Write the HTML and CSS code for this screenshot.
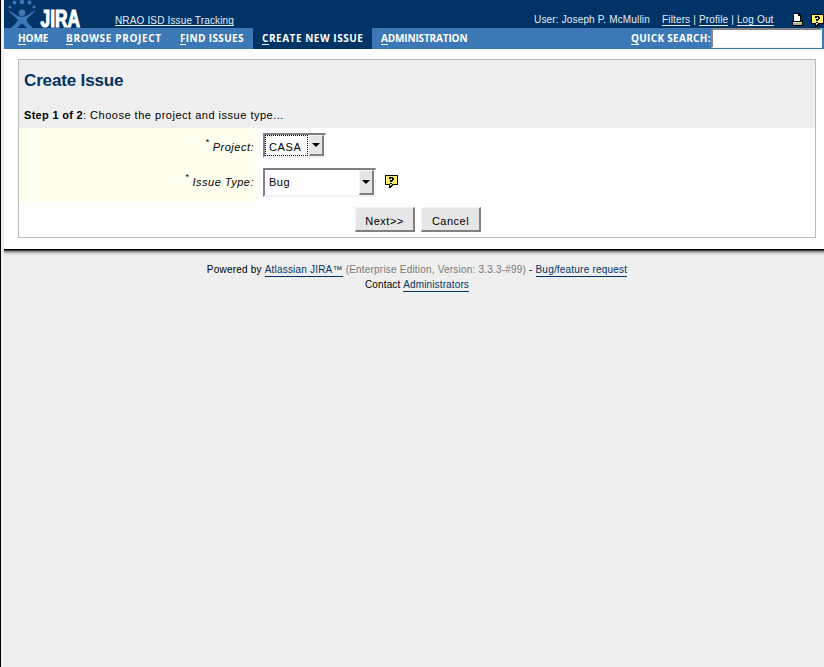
FILE: index.html
```
<!DOCTYPE html>
<html lang="en">
<head>
<meta charset="utf-8">
<title>Create Issue - NRAO ISD Issue Tracking</title>
<link rel="stylesheet" href="styles.css">
</head>
<body>
<div class="page">
  <header class="top">
    <svg class="logo" width="80" height="28" viewBox="0 0 80 28" aria-label="JIRA">
      <g fill="#3c78b5">
        <circle cx="6" cy="7" r="1.6"/><circle cx="10.500" cy="2.500" r="2"/><circle cx="18" cy="2" r="2.300"/><circle cx="25.500" cy="2.500" r="2"/><circle cx="30" cy="7" r="1.600"/>
        <circle cx="18" cy="13" r="3.400"/>
        <path d="M4 10C9 12 13 17 18 17S27 12 32 10C28 15 23 18 22.500 20C23 23 27 26 29 28H23C21 27 20 24 18 24S15 27 13 28H7C9 26 13 23 13.500 20C13 18 8 15 4 10Z"/>
      </g>
      <text class="logo-word" x="36.500" y="27" textLength="39.500" lengthAdjust="spacingAndGlyphs">JIRA</text>
    </svg>
    <a class="site">NRAO ISD Issue Tracking</a>
    <div class="user">
      <span class="who">User: Joseph P. McMullin</span>
      <span class="links"><a>Filters</a> | <a>Profile</a> | <a>Log Out</a></span>
    </div>
    <svg class="printer" width="13" height="13" viewBox="0 0 13 13" shape-rendering="crispEdges">
      <path d="M3 0H8L10 2V7H12V12L11 13H1V8L2 7Z" fill="#000"/>
      <path d="M3 1H7V3H9V8H3Z" fill="#fff"/><path d="M2 9H11V10H2Z" fill="#ddd"/><path d="M2 10H11V12H2Z" fill="#aaa"/><path d="M7 10H10V11H7Z" fill="#9c3"/>
    </svg>
    <svg class="help" width="13" height="13" viewBox="0 0 13 13" shape-rendering="crispEdges">
      <path d="M0 0H13V10H8V11H7V12H6V13H4V10H0Z" fill="#000"/><path d="M1 1H12V9H7V10H6V11H5V9H1Z" fill="#ffee6b"/><path d="M4 2H8V3H9V5H8V6H7V7H5V5H7V3H6V4H4ZM5 8H7V9H5Z" fill="#000"/>
    </svg>
  </header>
  <nav class="menu">
    <a class="home"><u>H</u>OME</a><a class="browse"><u>B</u>ROWSE PROJECT</a><a class="find"><u>F</u>IND ISSUES</a><a class="create active"><u>C</u>REATE NEW ISSUE</a><a class="admin"><u>A</u>DMINISTRATION</a>
    <label class="search"><span><u>Q</u>UICK SEARCH:</span><input type="text"></label>
  </nav>
  <main class="content">
    <section class="panel">
      <div class="panel-head">
        <h1>Create Issue</h1>
        <p><b>Step 1 of 2</b>: Choose the project and issue type...</p>
      </div>
      <div class="row project">
        <div class="label"><sup>*</sup><i>Project:</i></div>
        <div class="field">
          <div class="select"><span class="value focused">CASA</span><span class="drop"></span></div>
        </div>
      </div>
      <div class="row type">
        <div class="label"><sup>*</sup><i>Issue Type:</i></div>
        <div class="field">
          <div class="select"><span class="value">Bug</span><span class="drop"></span></div>
          <svg class="hint" width="13" height="13" viewBox="0 0 13 13" shape-rendering="crispEdges">
            <path d="M0 0H13V10H8V11H7V12H6V13H4V10H0Z" fill="#000"/><path d="M1 1H12V9H7V10H6V11H5V9H1Z" fill="#ffee6b"/><path d="M4 2H8V3H9V5H8V6H7V7H5V5H7V3H6V4H4ZM5 8H7V9H5Z" fill="#000"/>
          </svg>
        </div>
      </div>
      <div class="actions"><button class="next">Next&gt;&gt;</button><button class="cancel">Cancel</button></div>
    </section>
  </main>
  <div class="shadow"></div>
  <footer>
    <div class="powered">Powered by <a>Atlassian JIRA™</a> <span>(Enterprise Edition, Version: 3.3.3-#99)</span> - <a>Bug/feature request</a></div>
    <div class="contact">Contact <a>Administrators</a></div>
  </footer>
</div>
</body>
</html>
```
FILE: styles.css
```
* { box-sizing: border-box; }
body {
  margin: 0;
  height: 667px;
  overflow: hidden;
  border-left: 1px solid #000;
  background: #efefef;
  font-family: "Liberation Sans", sans-serif;
  font-size: 11px;
  color: #000;
}
.page {
  height: 667px;
  border-left: 3px solid #f5eeee;
}
.top {
  display: flex;
  height: 28px;
  background: #003366;
  color: #e6eef6;
  font-size: 10px;
}
.logo { flex: none; overflow: visible; }
.logo-word {
  font: bold 23px "Liberation Sans", sans-serif;
  fill: #fff;
  stroke: #fff;
  stroke-width: 1.2px;
}
.site {
  margin: 15px 0 0 31px;
  height: 11px;
  line-height: 11px;
  border-bottom: 1px solid #e6eef6;
  letter-spacing: 0.15px;
}
.user {
  display: flex;
  margin: 14px 0 0 auto;
  line-height: 12px;
  white-space: nowrap;
}
.who { width: 128px; letter-spacing: 0.16px; }
.links { width: 129px; letter-spacing: 0.15px; }
.links a {
  display: inline-block;
  height: 12px;
  border-bottom: 1px solid #e6eef6;
}
.printer { flex: none; margin-top: 13px; }
.help { flex: none; margin: 14px 0 0 7px; }
.menu {
  display: flex;
  height: 21px;
  padding-left: 5px;
  background: #3c78b5;
  color: #fff;
  font: bold 10px/21px "Open Sans", sans-serif;
  white-space: nowrap;
}
.menu a { padding: 0 9px; }
.menu u {
  display: inline-block;
  height: 17px;
  line-height: 21px;
  vertical-align: top;
  text-decoration: none;
  border-bottom: 1px solid #fff;
}
.home { width: 48px; letter-spacing: -0.1px; }
.browse { width: 114px; letter-spacing: 0.65px; }
.find { width: 82px; letter-spacing: 0.36px; }
.create { width: 119px; letter-spacing: 0.53px; }
.admin { width: 104px; letter-spacing: -0.15px; }
.active { background: #003366; }
.search { display: flex; margin-left: auto; letter-spacing: 0.3px; }
.search span { width: 80px; }
.search input {
  width: 111px;
  height: 20px;
  margin: 0 2px 0 0;
  padding: 0 4px;
  border: solid;
  border-width: 2px 1px 1px 2px;
  border-color: #858585 #f4f4f4 #f4f4f4 #858585;
  background: #fff;
}
.content {
  height: 200px;
  padding: 10px 8px 0 14px;
  background: #fff;
}
.panel {
  height: 179px;
  border: 1px solid #bbb;
}
.panel-head {
  height: 68px;
  padding: 10px 5px 0;
  background: #efefef;
}
h1 {
  margin: 0;
  font-size: 17px;
  line-height: 21px;
  letter-spacing: -0.15px;
  color: #003366;
}
.panel-head p {
  margin: 17px 0 0;
  line-height: 15px;
  letter-spacing: 0.51px;
}
.panel-head b { letter-spacing: 0.3px; }
.row { display: flex; }
.project { height: 36px; }
.type { height: 38px; }
.label {
  width: 239px;
  padding: 10px 4px 0 0;
  background: #fffff0;
  text-align: right;
  line-height: 18px;
  letter-spacing: 0.5px;
}
.type .label { padding-top: 9px; }
.label sup {
  margin-right: 3px;
  font-size: 9px;
  line-height: 0;
  vertical-align: 6px;
}
.field {
  display: flex;
  padding: 5px 0 0 5px;
}
.select {
  display: flex;
  width: 63px;
  height: 25px;
  border: solid;
  border-width: 2px 1px 2px 2px;
  border-color: #808080 #f4f4f4 #f4f4f4 #808080;
}
.value {
  flex: 1;
  padding-left: 4px;
  line-height: 23px;
  letter-spacing: 0.5px;
}
.focused {
  padding-left: 3px;
  line-height: 22px;
  letter-spacing: 0.6px;
  border: 1px dotted #000;
}
.drop {
  display: flex;
  width: 15px;
  margin: 0 1px 0 1px;
  border: solid;
  border-width: 1px 2px 2px 1px;
  border-color: #f4f4f4 #808080 #808080 #f4f4f4;
  background: #e6e6e6;
}
.drop::before {
  content: "";
  margin: 7px auto 0;
  height: 4px;
  border: solid transparent;
  border-width: 4px 4px 0;
  border-top-color: #000;
}
.type .select { width: 113px; height: 29px; }
.type .value { line-height: 25px; }
.type .drop::before { margin-top: 9px; }
.type .field { padding-top: 4px; }
.hint { margin: 7px 0 0 9px; }
.actions {
  display: flex;
  gap: 6px;
  padding: 5px 0 0 336px;
}
button {
  width: 60px;
  height: 25px;
  padding: 3px 0 0;
  border: solid;
  border-width: 1px 2px 2px 1px;
  border-color: #f4f4f4 #808080 #808080 #f4f4f4;
  background: #e6e6e6;
  font: 11px "Liberation Sans", sans-serif;
  letter-spacing: 0.5px;
}
.shadow {
  height: 7px;
  background: linear-gradient(#000 0 1px, #444 1px 2px, #888 2px 3px, #b4b4b4 3px 4px, #d0d0d0 4px 5px, #e2e2e2 5px 6px, #eaeaea 6px);
}
footer {
  padding-top: 8px;
  text-align: center;
  font-size: 10px;
  line-height: 12px;
  letter-spacing: 0.2px;
}
footer div { height: 15px; }
.powered { padding-left: 6px; }
.contact { padding-left: 6px; letter-spacing: 0.13px; }
footer a {
  display: inline-block;
  color: #003366;
  border-bottom: 1px solid #003366;
}
footer span { color: #777; }
```
